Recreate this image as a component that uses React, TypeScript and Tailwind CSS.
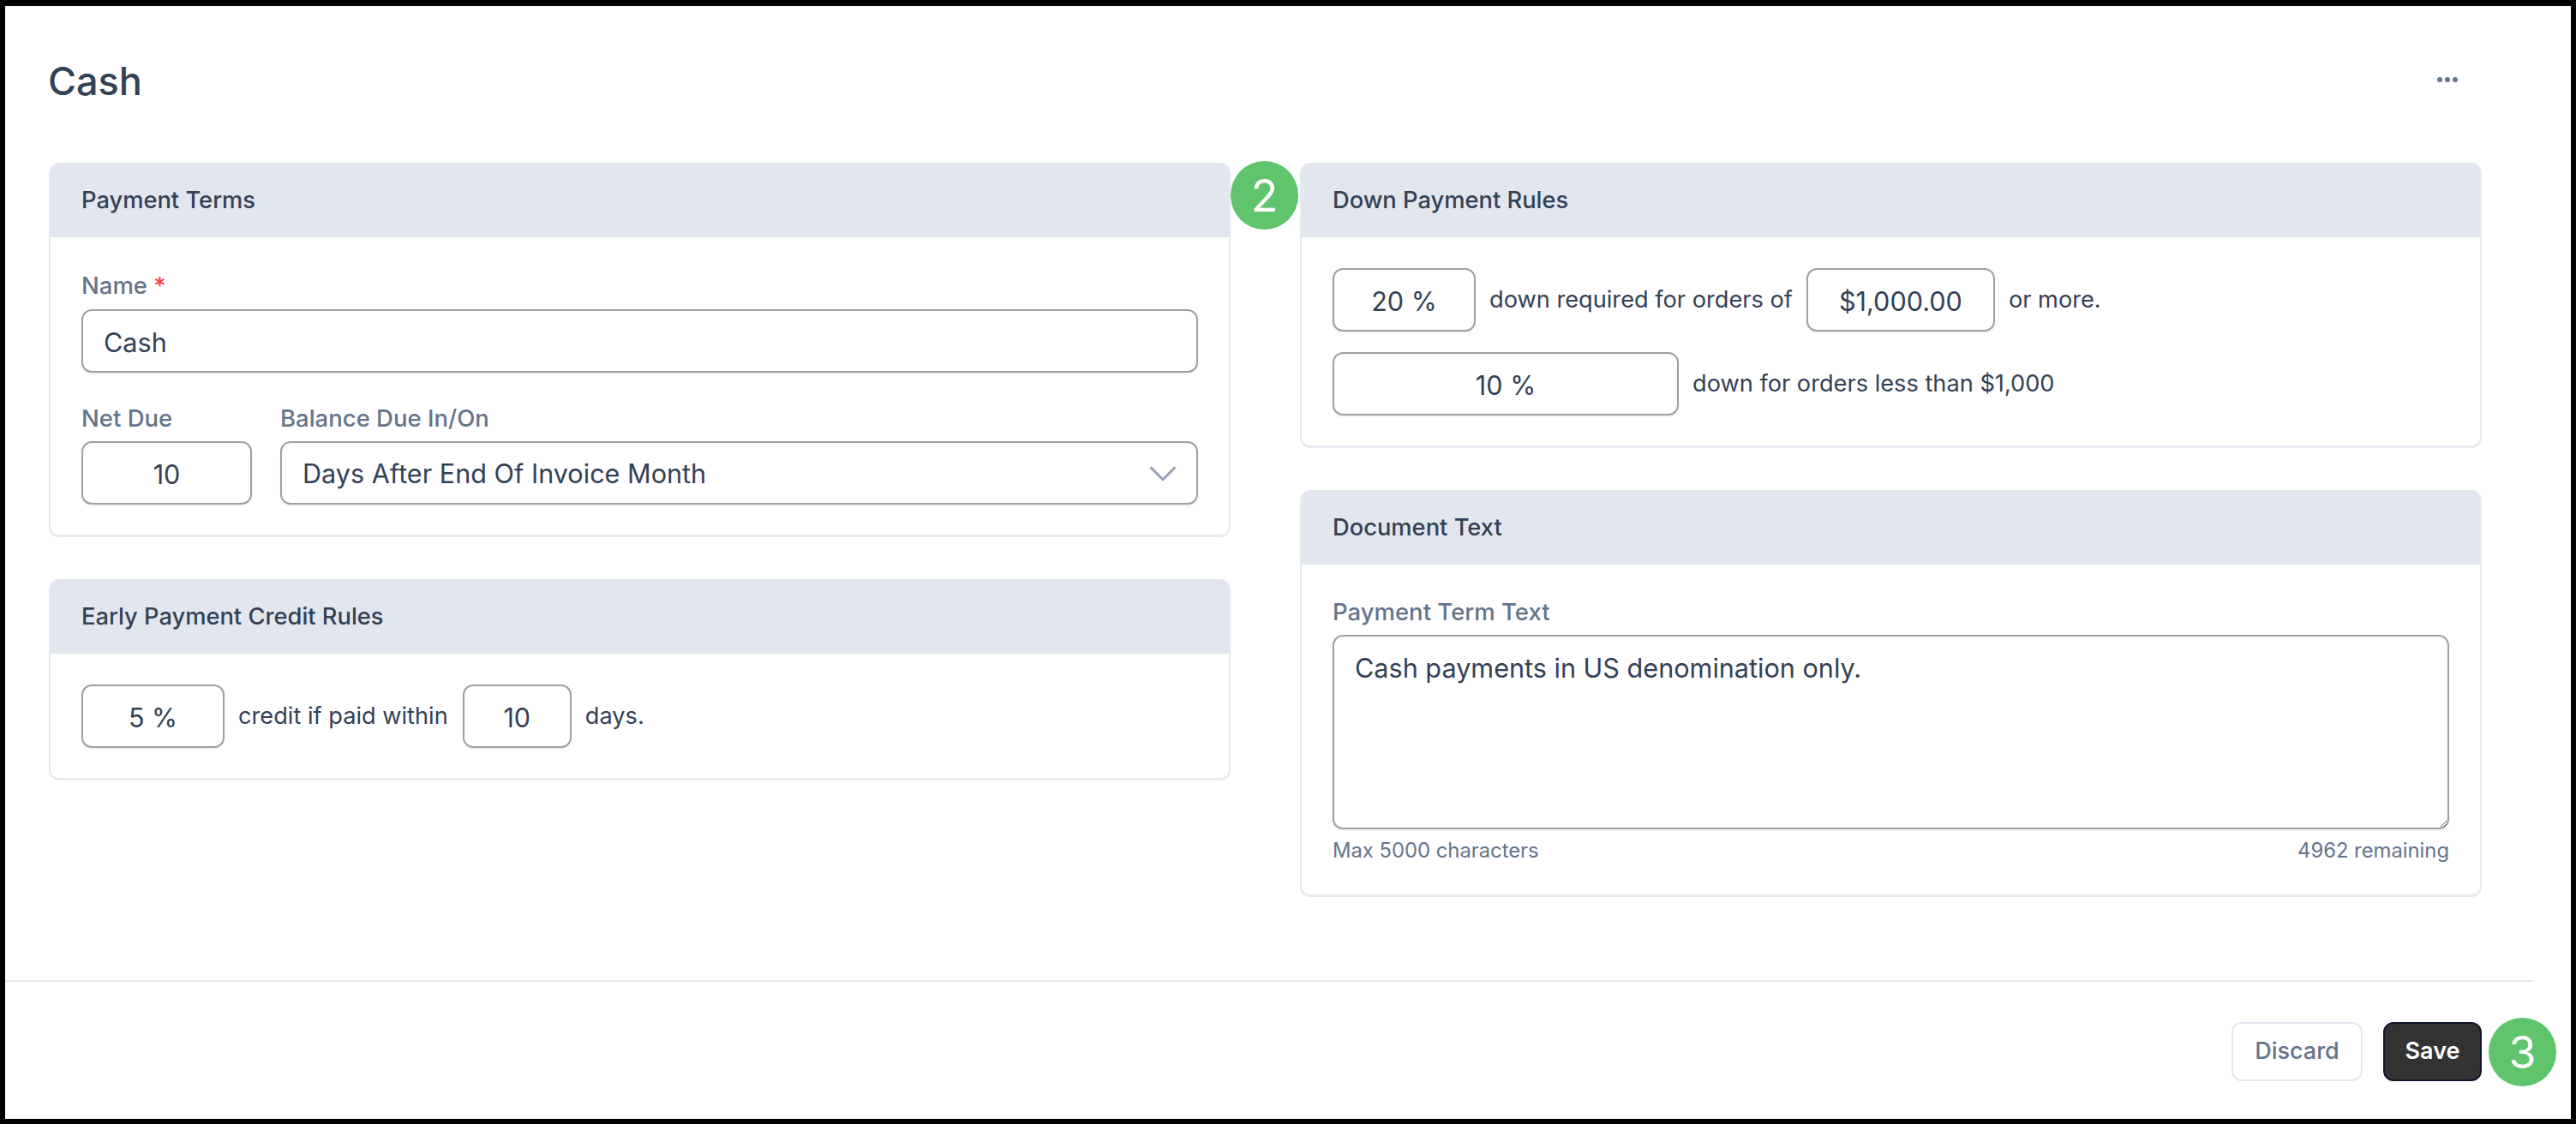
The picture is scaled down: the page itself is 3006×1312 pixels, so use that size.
import { ChevronDown } from "lucide-react";
import type { ReactNode } from "react";

const inputCls =
  "h-[74px] rounded-[12px] border-2 border-[#a0a0a0] bg-white pt-[2px] text-[30.6px] text-[#334155] shadow-[0_2px_2px_rgba(0,0,0,0.05)] outline-none";

function Card({ title, children, className }: { title: string; children: ReactNode; className?: string }) {
  return (
    <section className={"overflow-hidden rounded-[12px] bg-white border-x-2 border-b-[3px] border-[#e6eaf0] " + (className ?? "")}>
      <h2 className="-mx-[2px] flex h-[87px] items-center bg-[#e2e7ef] px-[38px] pt-[2px] text-[27.3px] font-medium text-[#334155]">
        {title}
      </h2>
      {children}
    </section>
  );
}

function Label({ children }: { children: ReactNode }) {
  return <label className="block h-[26px] text-[27.5px] leading-[26px] font-medium text-[#64748b]">{children}</label>;
}

function Field({ value, className }: { value: string; className: string }) {
  return <input readOnly defaultValue={value} className={inputCls + " text-center " + className} />;
}

function Text({ children }: { children: ReactNode }) {
  return <span className="pt-[2px] text-[27.2px] text-[#334155]">{children}</span>;
}

function Badge({ n, className }: { n: number; className: string }) {
  return (
    <div className={"absolute flex h-[80px] w-[79px] items-center justify-center rounded-full bg-[#5fc46b] pt-[2px] text-[52px] text-white " + className}>
      {n}
    </div>
  );
}

export default function App() {
  return (
    <div
      className="relative flex h-[1312px] w-[3006px] flex-col border-x-[6px] border-t-[7px] border-b-[6px] border-black bg-white"
      style={{ fontFamily: "Inter, 'Noto Sans', sans-serif" }}
    >
      <header className="flex h-[183px] shrink-0 items-start justify-between pl-[50px] pr-[132px]">
        <h1 className="mt-[56px] text-[45px] leading-[64px] font-medium text-[#334155]">Cash</h1>
        <svg className="mt-[80px] text-[#64748b]" width="24" height="12" viewBox="0 0 24 12" fill="currentColor">
          <circle cx="3" cy="6" r="3" />
          <circle cx="12" cy="6" r="3" />
          <circle cx="21" cy="6" r="3" />
        </svg>
      </header>

      <main className="flex flex-1 items-start gap-[81px] pl-[51px]">
        <div className="flex w-[1379px] flex-col gap-[49px]">
          <Card title="Payment Terms">
            <div className="px-[36px] pt-[43px] pb-[35px]">
              <Label>
                Name <span className="text-[#ef4444]">*</span>
              </Label>
              <input readOnly defaultValue="Cash" className={inputCls + " mt-[15px] w-full px-[24px]"} />
              <div className="mt-[40px] flex gap-[33px]">
                <div>
                  <Label>Net Due</Label>
                  <Field value="10" className="mt-[14px] w-[199px]" />
                </div>
                <div className="flex-1">
                  <Label>Balance Due In/On</Label>
                  <div className={inputCls + " mt-[14px] flex items-center justify-between pl-[24px] pr-[12px]"}>
                    Days After End Of Invoice Month
                    <ChevronDown className="text-[#94a3b8]" size={54} strokeWidth={1.4} />
                  </div>
                </div>
              </div>
            </div>
          </Card>

          <Card title="Early Payment Credit Rules">
            <div className="flex items-center px-[36px] pt-[36px] pb-[35px]">
              <Field value="5 %" className="w-[167px]" />
              <span className="ml-[16px] mr-[17px]"><Text>credit if paid within</Text></span>
              <Field value="10" className="w-[127px]" />
              <span className="ml-[16px]"><Text>days.</Text></span>
            </div>
          </Card>
        </div>

        <div className="flex w-[1379px] flex-col gap-[49px]">
          <Card title="Down Payment Rules">
            <div className="px-[36px] pt-[36px] pb-[35px]">
              <div className="flex items-center">
                <Field value="20 %" className="w-[167px]" />
                <span className="mx-[16px]"><Text>down required for orders of</Text></span>
                <Field value="$1,000.00" className="w-[220px]" />
                <span className="ml-[16px]"><Text>or more.</Text></span>
              </div>
              <div className="mt-[24px] flex items-center">
                <Field value="10 %" className="w-[404px]" />
                <span className="ml-[16px]"><Text>down for orders less than $1,000</Text></span>
              </div>
            </div>
          </Card>

          <Card title="Document Text">
            <div className="px-[36px] pt-[42px] pb-[38px]">
              <Label>Payment Term Text</Label>
              <textarea
                readOnly
                defaultValue="Cash payments in US denomination only."
                className="mt-[14px] block h-[227px] w-full rounded-[12px] border-2 border-[#a0a0a0] px-[24px] py-[14px] text-[30.6px] text-[#334155] shadow-[0_2px_2px_rgba(0,0,0,0.05)] outline-none"
              />
              <div className="mt-[12px] flex justify-between text-[23.8px] leading-[26px] text-[#64748b]">
                <span>Max 5000 characters</span>
                <span>4962 remaining</span>
              </div>
            </div>
          </Card>
        </div>
      </main>

      <footer className="mr-[44px] flex h-[162px] shrink-0 items-start justify-end gap-[24px] border-t-2 border-[#e2e8f0] pt-[47px] pr-[60px]">
        <button className="h-[69px] w-[153px] rounded-[12px] border-2 border-[#e2e8f0] bg-white text-[27px] font-medium text-[#64748b]">
          Discard
        </button>
        <button className="h-[69px] w-[115px] rounded-[12px] border-2 border-[#0f172a] bg-[#333333] text-[27px] font-semibold text-white">
          Save
        </button>
      </footer>

      <Badge n={2} className="left-[1430px] top-[181px]" />
      <Badge n={3} className="left-[2898px] top-[1181px]" />
    </div>
  );
}
